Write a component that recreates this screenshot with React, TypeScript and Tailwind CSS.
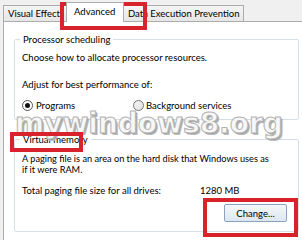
export default function App() {
  const font = "font-['Lato','Liberation_Sans',sans-serif]";
  return (
    <div className={`relative flex h-[240px] w-[302px] flex-col overflow-hidden bg-[#f0f0f0] text-[9.5px] leading-[11px] text-black ${font}`}>
      {/* tab strip */}
      <div className="flex h-[21px] items-end pl-[3px]">
        <div className="flex h-[16px] w-[65px] items-center border border-b-0 border-[#acacac] bg-gradient-to-b from-[#f5f5f5] to-[#e6e6e6] pl-[4px]">
          Visual Effects
        </div>
        <div className="relative z-10 -mb-px -ml-[2px] flex h-[20px] w-[58px] items-center border border-b-0 border-[#acacac] bg-white pb-[3px] pl-[7px]">
          Advanced
        </div>
        <div className="flex h-[16px] w-[120px] items-center border border-b-0 border-l-0 border-[#acacac] bg-gradient-to-b from-[#f5f5f5] to-[#e6e6e6] pl-[4px]">
          Data Execution Prevention
        </div>
      </div>

      {/* tab page */}
      <div className="ml-[3px] flex flex-1 flex-col border-l border-t border-[#acacac] bg-white pl-[10px] pr-[3px] pt-[12px]">
        <fieldset className="h-[86px] rounded-[2px] border border-[#d5dfe5] px-[7px]">
          <legend className="ml-[-2px] px-[3px]">Processor scheduling</legend>
          <p className="mt-[7px]">Choose how to allocate processor resources.</p>
          <p className="mt-[16px]">Adjust for best performance of:</p>
          <div className="mt-[10px] flex items-center">
            <span className="flex h-[11px] w-[11px] items-center justify-center rounded-full border border-[#555] bg-white">
              <span className="h-[5px] w-[5px] rounded-full bg-[#111]" />
            </span>
            <span className="ml-[3px] w-[97px]">Programs</span>
            <span className="h-[11px] w-[11px] rounded-full border border-[#777] bg-gradient-to-br from-[#f6f6f6] to-[#e0e0e0]" />
            <span className="ml-[2px]">Background services</span>
          </div>
        </fieldset>

        <fieldset className="mt-[14px] h-[98px] rounded-[2px] border border-[#d5dfe5] px-[7px]">
          <legend className="ml-[-2px] px-[3px]">Virtual memory</legend>
          <p className="mt-[8px] text-[9.2px]">
            A paging file is an area on the hard disk that Windows uses as
            <br />
            if it were RAM.
          </p>
          <div className="mt-[10px] flex">
            <span className="w-[178px]">Total paging file size for all drives:</span>
            <span>1280 MB</span>
          </div>
          <div className="mt-[8px] flex justify-end pr-[4px]">
            <button className="h-[18px] w-[63px] rounded-[2px] border border-[#8aa2c0] bg-gradient-to-b from-[#f4f7fb] to-[#dde7f1] text-[9.5px]">
              Change...
            </button>
          </div>
        </fieldset>
      </div>

      {/* watermark */}
      <div className="pointer-events-none absolute left-[15px] top-[107px] font-['DejaVu_Sans',Verdana,sans-serif] text-[28px] font-bold leading-[34px] text-[#f7f7f7] [-webkit-text-stroke:1px_#b4b4b4] [text-shadow:1px_1px_0_#a0a0a0,2px_2px_0_#bbbbbb]">
        mywindows8.org
      </div>

      {/* red highlight boxes */}
      <div className="pointer-events-none absolute left-[60px] top-[2px] h-[28px] w-[87px] border-[4px] border-[#d8222c]" />
      <div className="pointer-events-none absolute left-[10px] top-[132px] h-[20px] w-[73px] border-[4px] border-[#d8222c]" />
      <div className="pointer-events-none absolute left-[203px] top-[198px] h-[39px] w-[95px] border-[4px] border-[#d8222c]" />
    </div>
  );
}
